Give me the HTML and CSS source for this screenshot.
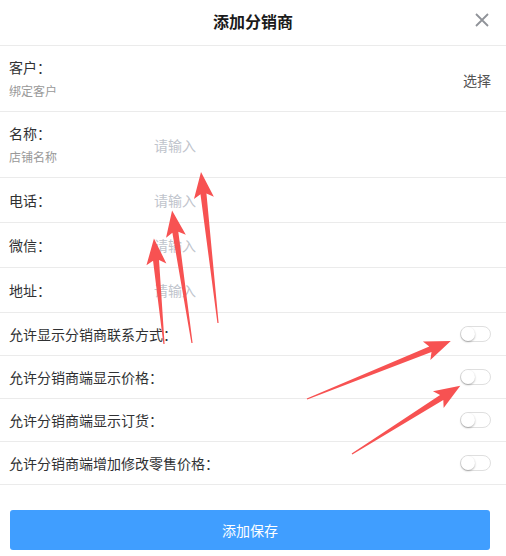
FILE: index.html
```html
<!DOCTYPE html>
<html lang="zh-CN">
<head>
  <meta charset="UTF-8">
  <meta name="viewport" content="width=device-width, initial-scale=1.0">
  <title>添加分销商</title>
  <link rel="stylesheet" href="styles.css">
</head>

<body>
  <div class="dialog">
    <header class="header">
      <h1 class="title">添加分销商</h1>
      <button class="close" aria-label="关闭">
        <svg width="14" height="14" viewBox="0 0 14 14"><path d="M1 1L13 13M13 1L1 13" stroke="#909399" stroke-width="1.8" fill="none"/></svg>
      </button>
    </header>

    <div class="form">
      <div class="row row-tall">
        <div class="label-box">
          <div class="label">客户：</div>
          <div class="sub">绑定客户</div>
        </div>
        <span class="pick">选择</span>
      </div>
      <div class="row row-tall">
        <div class="label-box">
          <div class="label">名称：</div>
          <div class="sub">店铺名称</div>
        </div>
        <input class="field" placeholder="请输入">
      </div>
      <div class="row">
        <div class="label-box"><div class="label">电话：</div></div>
        <input class="field" placeholder="请输入">
      </div>
      <div class="row">
        <div class="label-box"><div class="label">微信：</div></div>
        <input class="field" placeholder="请输入">
      </div>
      <div class="row">
        <div class="label-box"><div class="label">地址：</div></div>
        <input class="field" placeholder="请输入">
      </div>

      <div class="row row-switch">
        <div class="label">允许显示分销商联系方式：</div>
        <span class="switch"></span>
      </div>
      <div class="row row-switch">
        <div class="label">允许分销商端显示价格：</div>
        <span class="switch"></span>
      </div>
      <div class="row row-switch">
        <div class="label">允许分销商端显示订货：</div>
        <span class="switch"></span>
      </div>
      <div class="row row-switch">
        <div class="label">允许分销商端增加修改零售价格：</div>
        <span class="switch"></span>
      </div>
    </div>

    <div class="footer">
      <button class="save">添加保存</button>
    </div>

    <!-- annotation arrows drawn over the form -->
    <svg class="marks" width="506" height="556" viewBox="0 0 506 556">
      <g fill="#f75252">
        <polygon transform="translate(218 323) rotate(-96.42)" points="0,-0.6 130,-3 126,-10 152,0 126,10 130,3 0,0.6"/>
        <polygon transform="translate(192 343) rotate(-98.55)" points="0,-0.6 112,-3 108,-10 134,0 108,10 112,3 0,0.6"/>
        <polygon transform="translate(164 344) rotate(-95.44)" points="0,-0.6 84,-3 80,-10 106,0 80,10 84,3 0,0.6"/>
        <polygon transform="translate(307 399) rotate(-21.94)" points="0,-0.6 133,-3 129,-10 155,0 129,10 133,3 0,0.6"/>
        <polygon transform="translate(352 454) rotate(-32.2)" points="0,-0.6 106,-3 102,-10 128,0 102,10 106,3 0,0.6"/>
      </g>
    </svg>
  </div>
</body>

</html>
```

FILE: styles.css
```css
:root {
  --primary: #409eff;
  --text: #303133;
  --text-sub: #999999;
  --placeholder: #c0c4cc;
  --border: #ebebeb;
}

* {
  margin: 0;
  padding: 0;
  box-sizing: border-box;
}

body {
  width: 506px;
  height: 556px;
  font-family: "Noto Sans CJK SC", "Noto Sans", sans-serif;
  color: var(--text);
  background: #ffffff;
  font-size: 14px;
}

.dialog {
  position: relative;
  height: 556px;
}

.header {
  position: relative;
  height: 46px;
  display: flex;
  align-items: center;
  justify-content: center;
  border-bottom: 1px solid var(--border);
}

.title {
  font-size: 16px;
  font-weight: 700;
  color: #1a1a1a;
  line-height: 1;
  margin-top: -4px;
}

.close {
  position: absolute;
  right: 16px;
  top: 12px;
  width: 16px;
  height: 16px;
  border: none;
  background: none;
  display: flex;
  align-items: center;
  justify-content: center;
}

.row {
  display: flex;
  align-items: center;
  height: 45px;
  padding: 0 15px 0 9px;
  border-bottom: 1px solid var(--border);
}

.row-tall {
  height: 66px;
}

.row-switch {
  height: 43px;
}

.label-box {
  width: 145px;
  flex-shrink: 0;
}

.label {
  font-size: 14px;
  line-height: 20px;
  color: var(--text);
}

.row-tall .label {
  margin-top: -2px;
}

.sub {
  font-size: 12px;
  line-height: 16px;
  color: var(--text-sub);
  margin-top: 6px;
}

.pick {
  margin-left: auto;
  font-size: 14px;
  color: #555555;
  margin-top: 2px;
}

.field {
  flex: 1;
  border: none;
  outline: none;
  font-family: inherit;
  font-size: 14px;
  color: var(--text);
  background: transparent;
}

.field::placeholder {
  color: var(--placeholder);
}

.row-switch .label {
  flex: 1;
}

.switch {
  position: relative;
  width: 31px;
  height: 16px;
  border: 1px solid #dfdfdf;
  border-radius: 8px;
  background: #ffffff;
  margin-right: 0;
}

.switch::before {
  content: "";
  position: absolute;
  left: 0;
  top: 0;
  width: 14px;
  height: 14px;
  border-radius: 50%;
  background: #ffffff;
  box-shadow: 0 1px 2px rgba(0, 0, 0, 0.3);
}

.footer {
  padding: 25px 16px 0 10px;
}

.save {
  width: 100%;
  height: 40px;
  border: none;
  border-radius: 3px;
  background: var(--primary);
  color: #ffffff;
  font-family: inherit;
  font-size: 14px;
}

.marks {
  position: absolute;
  left: 0;
  top: 0;
  pointer-events: none;
}
```
